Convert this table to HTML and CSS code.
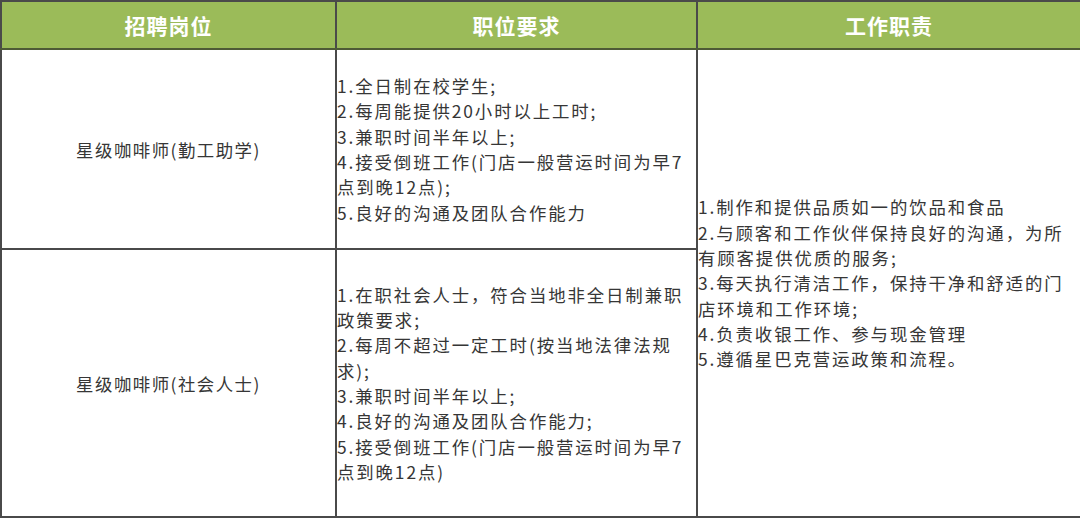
FILE: index.html
```html
<!DOCTYPE html>
<html lang="zh">
<head>
<meta charset="utf-8">
<link rel="stylesheet" href="styles.css">
</head>
<body>
<table class="jobs">
  <colgroup>
    <col class="c1"><col class="c2"><col class="c3">
  </colgroup>
  <thead>
    <tr class="head">
      <th>招聘岗位</th>
      <th>职位要求</th>
      <th>工作职责</th>
    </tr>
  </thead>
  <tbody>
    <tr class="r1">
      <td class="pos">星级咖啡师(勤工助学)</td>
      <td class="list">
        <span class="ln">1.全日制在校学生;</span>
        <span class="ln">2.每周能提供20小时以上工时;</span>
        <span class="ln">3.兼职时间半年以上;</span>
        <span class="ln">4.接受倒班工作(门店一般营运时间为早7</span>
        <span class="ln">点到晚12点);</span>
        <span class="ln">5.良好的沟通及团队合作能力</span>
      </td>
      <td class="list duty" rowspan="2">
        <span class="ln">1.制作和提供品质如一的饮品和食品</span>
        <span class="ln">2.与顾客和工作伙伴保持良好的沟通，为所</span>
        <span class="ln">有顾客提供优质的服务;</span>
        <span class="ln">3.每天执行清洁工作，保持干净和舒适的门</span>
        <span class="ln">店环境和工作环境;</span>
        <span class="ln">4.负责收银工作、参与现金管理</span>
        <span class="ln">5.遵循星巴克营运政策和流程。</span>
      </td>
    </tr>
    <tr class="r2">
      <td class="pos">星级咖啡师(社会人士)</td>
      <td class="list">
        <span class="ln">1.在职社会人士，符合当地非全日制兼职</span>
        <span class="ln">政策要求;</span>
        <span class="ln">2.每周不超过一定工时(按当地法律法规</span>
        <span class="ln">求);</span>
        <span class="ln">3.兼职时间半年以上;</span>
        <span class="ln">4.良好的沟通及团队合作能力;</span>
        <span class="ln">5.接受倒班工作(门店一般营运时间为早7</span>
        <span class="ln">点到晚12点)</span>
      </td>
    </tr>
  </tbody>
</table>
</body>
</html>
```

FILE: styles.css
```css
html, body {
  margin: 0;
  padding: 0;
  background: #ffffff;
}
body {
  width: 1080px;
  height: 518px;
  overflow: hidden;
  font-family: "Noto Sans CJK SC", "Noto Sans", sans-serif;
}
.jobs {
  width: 1080px;
  height: 518px;
  border-collapse: collapse;
  table-layout: fixed;
  border: 2px solid #2f2f2f;
}
.c1 { width: 335px; }
.c2 { width: 361px; }
.c3 { width: 384px; }
.jobs th,
.jobs td {
  border: 2px solid #4a4a4a;
  padding: 0;
}
.head {
  height: 48px;
}
.head th {
  background: #9bbb59;
  color: #ffffff;
  font-size: 21px;
  font-weight: 700;
  letter-spacing: 1px;
  text-align: center;
  vertical-align: middle;
  border-bottom: 2px solid #4e5a36;
}
.r1 { height: 200px; }
.r2 { height: 268px; }
.pos {
  text-align: center;
  vertical-align: middle;
  font-size: 17.4px;
  letter-spacing: 1.5px;
  color: #363636;
  padding-top: 4px;
}
.list {
  vertical-align: middle;
  font-size: 17.4px;
  letter-spacing: 1.9px;
  line-height: 25.3px;
  color: #363636;
  padding-left: 2px;
}
.duty {
  padding-left: 3px;
  padding-top: 2px;
}
.ln {
  display: block;
  white-space: nowrap;
}
```
